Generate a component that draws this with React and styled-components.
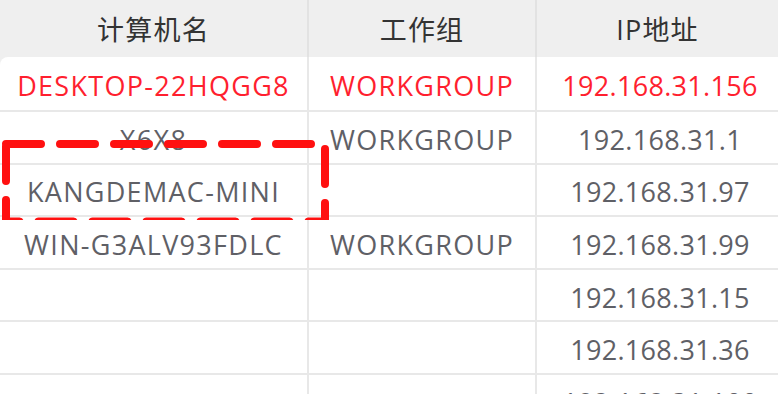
import React from 'react';
import styled, { createGlobalStyle } from 'styled-components';

const rows = [
  { name: 'DESKTOP-22HQGG8', group: 'WORKGROUP', ip: '192.168.31.156', active: true },
  { name: 'X6X8', group: 'WORKGROUP', ip: '192.168.31.1' },
  { name: 'KANGDEMAC-MINI', group: '', ip: '192.168.31.97' },
  { name: 'WIN-G3ALV93FDLC', group: 'WORKGROUP', ip: '192.168.31.99' },
  { name: '', group: '', ip: '192.168.31.15' },
  { name: '', group: '', ip: '192.168.31.36' },
  { name: '', group: '', ip: '192.168.31.100' },
];

const GlobalStyle = createGlobalStyle`
  html, body {
    margin: 0;
    padding: 0;
    background: #efefef;
    overflow: hidden;
  }
  body {
    font-family: 'Open Sans', 'Noto Sans CJK SC', sans-serif;
  }
`;

const App = () => {
  return (
    <>
      <GlobalStyle />
      <Page>
        <HeaderRow>
          <HeadCell>计算机名</HeadCell>
          <HeadCell>工作组</HeadCell>
          <HeadCell last>IP地址</HeadCell>
        </HeaderRow>
        <Body>
          {rows.map((r, i) => (
            <Row key={i} first={i === 0} active={r.active}>
              <Cell>{r.name}</Cell>
              <Cell>{r.group}</Cell>
              <Cell last numeric>{r.ip}</Cell>
            </Row>
          ))}
        </Body>
        {/* dashed annotation drawn over the KANGDEMAC-MINI cell */}
        <Marker width='340' height='90' viewBox='0 130 340 90'>
          <rect
            x='6'
            y='144'
            width='319'
            height='77.5'
            fill='none'
            stroke='#ff1010'
            strokeWidth='8'
            strokeLinecap='round'
            strokeDasharray='35 19'
          />
        </Marker>
      </Page>
    </>
  );
};

const Page = styled.div`
  position: relative;
  width: 778px;
  height: 394px;
  overflow: hidden;
  background: #efefef;
`;

const HeaderRow = styled.div`
  display: grid;
  grid-template-columns: 309px 228px 1fr;
  height: 57px;
  background: #efefef;
`;

const HeadCell = styled.div`
  display: flex;
  align-items: center;
  justify-content: center;
  font-size: 27px;
  letter-spacing: 1.2px;
  color: #333;
  border-right: ${props => (props.last ? 'none' : '2px solid #e2e2e2')};
`;

const Body = styled.div`
  background: #fff;
  border-top-left-radius: 8px;
  overflow: hidden;
`;

const Row = styled.div`
  display: grid;
  grid-template-columns: 309px 228px 1fr;
  height: ${props => (props.first ? '55px' : '52.6px')};
  box-sizing: border-box;
  border-bottom: 2px solid #e8e8e8;
  color: ${props => (props.active ? '#ff1f2f' : '#5f6066')};
`;

const Cell = styled.div`
  display: flex;
  align-items: center;
  justify-content: center;
  padding-top: 4px;
  padding-left: ${props => (props.numeric ? '5px' : '0')};
  font-size: 27px;
  letter-spacing: ${props => (props.numeric ? '0.3px' : '1.3px')};
  white-space: nowrap;
  border-right: ${props => (props.last ? 'none' : '2px solid #e8e8e8')};
`;

const Marker = styled.svg`
  position: absolute;
  left: 0;
  top: 130px;
  pointer-events: none;
`;

export default App;
